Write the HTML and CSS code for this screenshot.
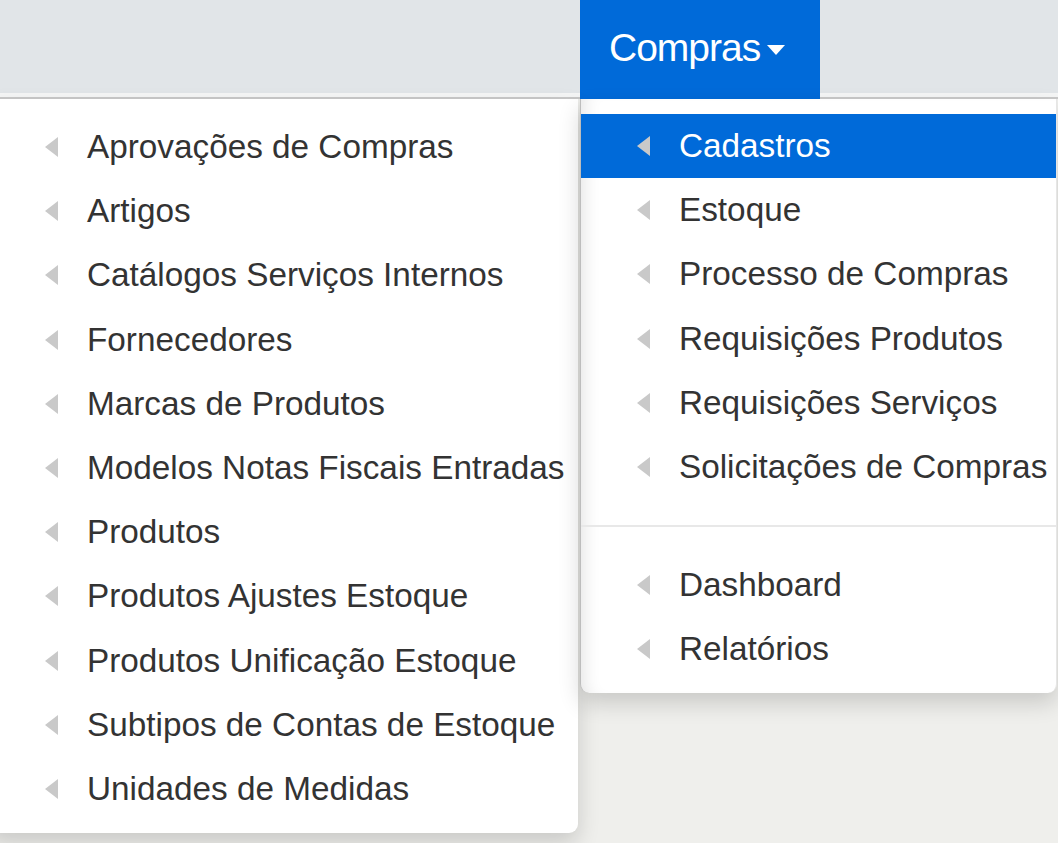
FILE: index.html
```html
<!DOCTYPE html>
<html lang="pt">
<head>
<meta charset="utf-8">
<title>Compras</title>
<link rel="stylesheet" href="styles.css">
</head>
<body>
<header class="topbar">
  <div class="nav">
    <div class="nav-spacer"></div>
    <a class="nav-item active">Compras<span class="caret"></span></a>
  </div>
</header>
<div class="menus">
  <ul class="menu menu-left">
    <li class="item"><span class="arrow"></span>Aprovações de Compras</li>
    <li class="item"><span class="arrow"></span>Artigos</li>
    <li class="item"><span class="arrow"></span>Catálogos Serviços Internos</li>
    <li class="item"><span class="arrow"></span>Fornecedores</li>
    <li class="item"><span class="arrow"></span>Marcas de Produtos</li>
    <li class="item"><span class="arrow"></span>Modelos Notas Fiscais Entradas</li>
    <li class="item"><span class="arrow"></span>Produtos</li>
    <li class="item"><span class="arrow"></span>Produtos Ajustes Estoque</li>
    <li class="item"><span class="arrow"></span>Produtos Unificação Estoque</li>
    <li class="item"><span class="arrow"></span>Subtipos de Contas de Estoque</li>
    <li class="item"><span class="arrow"></span>Unidades de Medidas</li>
  </ul>
  <ul class="menu menu-right">
    <li class="item selected"><span class="arrow"></span>Cadastros</li>
    <li class="item"><span class="arrow"></span>Estoque</li>
    <li class="item"><span class="arrow"></span>Processo de Compras</li>
    <li class="item"><span class="arrow"></span>Requisições Produtos</li>
    <li class="item"><span class="arrow"></span>Requisições Serviços</li>
    <li class="item"><span class="arrow"></span>Solicitações de Compras</li>
    <li class="divider"></li>
    <li class="item"><span class="arrow"></span>Dashboard</li>
    <li class="item"><span class="arrow"></span>Relatórios</li>
  </ul>
</div>
</body>
</html>
```
FILE: styles.css
```css
html, body {
  margin: 0;
  padding: 0;
}
body {
  background: #efefec;
  font-family: "Liberation Sans", Arial, sans-serif;
  color: #333;
  width: 1058px;
  height: 843px;
  overflow: hidden;
}
.topbar {
  height: 97px;
  background: linear-gradient(#e1e5e8 0, #e1e5e8 93px, #f5f6f6 93px, #f5f6f6 97px);
  border-bottom: 2px solid #c9c9c9;
}
.nav {
  display: flex;
  height: 97px;
}
.nav-spacer {
  width: 580px;
}
.nav-item {
  display: flex;
  align-items: center;
  box-sizing: border-box;
  width: 240px;
  height: 99px;
  padding-left: 29px;
  padding-bottom: 4px;
  background: #006ad9;
  color: #fff;
  font-size: 39px;
  letter-spacing: -1px;
}
.caret {
  display: inline-block;
  width: 0;
  height: 0;
  margin-left: 7px;
  margin-top: 4px;
  border-left: 9px solid transparent;
  border-right: 9px solid transparent;
  border-top: 10px solid #fff;
}
.menus {
  display: flex;
  align-items: flex-start;
  gap: 2px;
}
.menu {
  list-style: none;
  margin: 0;
  background: #fff;
  border-radius: 0 0 9px 9px;
  box-shadow: 0 10px 22px rgba(0, 0, 0, 0.16);
}
.menu-left {
  box-sizing: border-box;
  width: 590px;
  margin-left: -12px;
  padding: 16px 0 12px;
}
.menu-right {
  flex: 1;
  margin-right: 1px;
  padding: 15px 0 11px;
  border-left: 1px solid #bdbdbd;
  border-right: 1px solid #e6e6e6;
  box-shadow: 0 10px 22px rgba(0, 0, 0, 0.16), inset 16px 0 18px -14px rgba(0, 0, 0, 0.12);
}
.item {
  display: flex;
  align-items: center;
  height: 64.2px;
  font-size: 33.3px;
  color: #333;
  white-space: nowrap;
}
.menu-left .item {
  padding-left: 57px;
}
.menu-right .item {
  padding-left: 56px;
}
.arrow {
  display: inline-block;
  width: 0;
  height: 0;
  margin-right: 29px;
  border-top: 10px solid transparent;
  border-bottom: 10px solid transparent;
  border-right: 13px solid #c9c9c9;
}
.item.selected {
  background: #006ad9;
  color: #fff;
}
.divider {
  height: 2px;
  margin: 26px 0 26px;
  background: #e8e8e8;
}
```
